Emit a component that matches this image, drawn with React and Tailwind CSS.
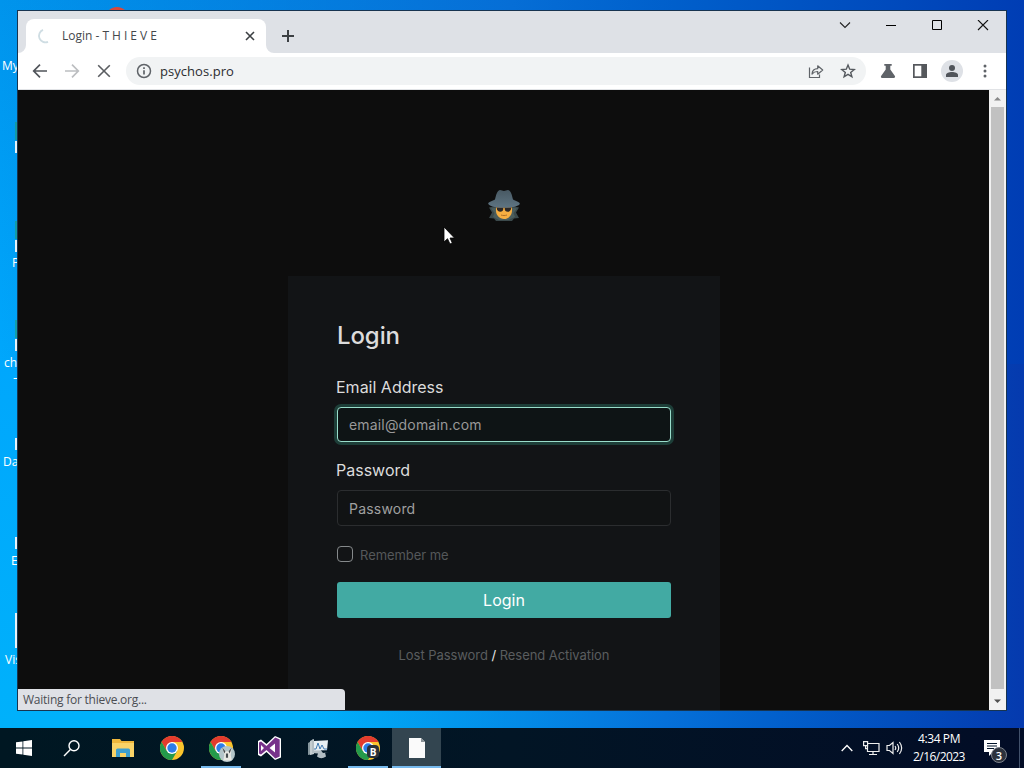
import React from 'react';

const desktopLabels = [
    { text: 'My', className: 'left-[2px] top-[58px]' },
    { text: 'P', className: 'left-[12px] top-[255px]' },
    { text: 'ch', className: 'left-[4px] top-[355px]' },
    { text: '–', className: 'left-[13px] top-[370px]' },
    { text: 'Da', className: 'left-[3px] top-[454px]' },
    { text: 'E', className: 'left-[11px] top-[553px]' },
    { text: 'Vis', className: 'left-[5px] top-[652px]' },
];

// Edges of the shortcut icons that stick out behind the window
const desktopEdges = [
    'top-[141px] h-3',
    'top-[240px] h-3',
    'top-[339px] h-3',
    'top-[438px] h-3',
    'top-[537px] h-3',
    'top-[613px] h-[35px]',
];

const greenEdges = ['top-[122px]', 'top-[221px]', 'top-[320px]'];

function Desktop() {
    return (
        <>
            {greenEdges.map((pos) => (
                <div key={pos} className={`absolute left-[15px] w-[3px] h-[18px] bg-[#1f9d72]/60 ${pos}`} />
            ))}
            {desktopEdges.map((pos) => (
                <div key={pos} className={`absolute left-[15px] w-[3px] bg-[#e8f2f8] ${pos}`} />
            ))}
            {desktopLabels.map((l) => (
                <span key={l.text} className={`absolute text-xs leading-4 text-white ${l.className}`}>{l.text}</span>
            ))}
            <div className="absolute left-[105px] top-[7px] w-6 h-6 rounded-full bg-[#d9483b]" />
        </>
    );
}

function TitleBar() {
    return (
        <div className="flex h-[42px] bg-[#dee1e6] pl-2">
            <div className="relative mt-2 flex w-[240px] items-center rounded-t-lg bg-white pl-[11px] pr-[10px]">
                <svg className="absolute -left-2 bottom-0" width="8" height="8"><path d="M8 0v8H0a8 8 0 0 0 8-8z" fill="#fff" /></svg>
                <svg className="absolute -right-2 bottom-0" width="8" height="8"><path d="M0 0v8h8a8 8 0 0 1-8-8z" fill="#fff" /></svg>
                <svg width="16" height="16" viewBox="0 0 16 16" fill="none">
                    <path d="M6 1.8A6.3 6.3 0 0 0 11 13.8" stroke="#cfdde3" strokeWidth="1.8" />
                </svg>
                <span className="ml-[9px] flex-1 whitespace-pre text-xs text-[#45484c]">
                    Login - <span className="tracking-[-0.05px]">T H I E V E</span>
                </span>
                <svg width="12" height="12" viewBox="0 0 12 12" stroke="#3c4043" strokeWidth="1.6"><path d="M2 2l8 8M10 2l-8 8" /></svg>
            </div>
            <svg className="ml-[15px] mt-[18px]" width="14" height="14" stroke="#3c4043" strokeWidth="2"><path d="M7 1v12M1 7h12" /></svg>
            <div className="ml-auto flex">
                <svg className="mt-[9px]" width="46" height="12" fill="none" stroke="#222" strokeWidth="1.1"><path d="M18 2.5l5 5 5-5" /></svg>
                <svg className="mt-[9px]" width="46" height="12" fill="none" stroke="#000"><path d="M18 5.5h10" /></svg>
                <svg className="mt-[9px]" width="46" height="12" fill="none" stroke="#000"><path d="M18.5 .5h9v9h-9z" /></svg>
                <svg className="mt-[9px]" width="46" height="12" fill="none" stroke="#111" strokeWidth="1.1"><path d="M18 0l10 10M28 0L18 10" /></svg>
            </div>
        </div>
    );
}

function Toolbar() {
    return (
        <div className="flex h-[37px] items-center border-b border-[#e1e3e6] bg-white pl-[14px] pr-[13px]">
            <svg width="16" height="16" fill="none" stroke="#50545a" strokeWidth="1.7"><path d="M15 8H2M8 1.7L1.7 8 8 14.3" /></svg>
            <svg className="ml-4" width="16" height="16" fill="none" stroke="#bcbec1" strokeWidth="1.7"><path d="M1 8h13M8 1.7L14.3 8 8 14.3" /></svg>
            <svg className="ml-4" width="16" height="16" fill="none" stroke="#5a5d61" strokeWidth="1.6"><path d="M2.2 2.2l11.6 11.6M13.8 2.2L2.2 13.8" /></svg>
            <div className="ml-[14px] flex h-7 w-[740px] items-center rounded-full bg-[#f1f3f4] pl-[10px] pr-[10px]">
                <svg width="16" height="16" fill="none" stroke="#5f6368" strokeWidth="1.5"><circle cx="8" cy="8" r="6.5" /><path d="M8 7.2v4.3M8 4.3v1.6" strokeWidth="1.7" /></svg>
                <span className="ml-2 flex-1 pt-0.5 text-[13px] tracking-[0.05px] text-[#2b2d30]">psychos.pro</span>
                <svg width="16" height="16" fill="none" stroke="#5f6368" strokeWidth="1.2">
                    <path d="M1.5 4.5v10h10v-3" />
                    <path d="M4 11c.3-3.5 2.4-5.2 5.7-5.3V2.8L14.7 7 9.7 11.2V8.5C7.2 8.4 5.500 9.2 4 11z" strokeLinejoin="round" />
                </svg>
                <svg className="ml-4" width="16" height="16" fill="none" stroke="#55595e" strokeWidth="1.4"><path d="M8 2l1.7 4.2 4.5.3-3.5 2.9 1.2 4.4L8 11.4l-3.9 2.4 1.2-4.4L1.8 6.5l4.5-.3z" /></svg>
            </div>
            <svg className="ml-[14px]" width="16" height="16" fill="#5f6368"><path d="M4.3 1h7.4v1.7h-1.400v3.7l4.6 6.7c.6 1-.1 1.9-1 1.9H2.1c-1 0-1.6-1-1-1.900l4.600-6.700V2.700H4.300z" /></svg>
            <svg className="ml-4" width="16" height="16"><path d="M1 1h14v14H1z" fill="#55585c" /><path d="M2.7 2.7h6.6v10.6H2.7z" fill="#fff" /></svg>
            <div className="ml-[13px] flex h-[22px] w-[22px] items-center justify-center rounded-full bg-[#dee1e6]">
                <svg width="14" height="14" fill="#50545a"><circle cx="7" cy="4" r="3" /><path d="M1 13v-2c0-2 3-3 6-3s6 1 6 3v2z" /></svg>
            </div>
            <svg className="ml-5" width="4" height="16" fill="#5f6368"><circle cx="2" cy="3" r="1.5" /><circle cx="2" cy="8" r="1.5" /><circle cx="2" cy="13" r="1.5" /></svg>
        </div>
    );
}

function DetectiveLogo() {
    return (
        <svg className="ml-[470px] mt-[99px] block" width="32" height="34" viewBox="0 0 32 34">
            <defs>
                <linearGradient id="hat" x1="0" y1="0" x2="0" y2="1">
                    <stop offset="0" stopColor="#485963" />
                    <stop offset="1" stopColor="#5e7482" />
                </linearGradient>
            </defs>
            <path d="M1 18.5l7-1.5h16l7 1.5-3 5 3 5.500-5 .5-2 2.500H8l-2-2.500-5-.5 3-5.500z" fill="#3b494b" />
            <path d="M3 19.500l6-1 1 8 6 4 6-4 1-8 6 1-3.500 4.500 1.500 4-7 3H11l-6-3 1.500-4z" fill="#4b5d5c" />
            <path d="M8 16h16v6c0 4-3.500 8-8 8s-8-4-8-8z" fill="#f6ae42" />
            <path d="M8 16h16v3H8z" fill="#af752d" />
            <path d="M8.700 18.500h6.600v1.500c0 1.600-1.200 2.800-3 2.800s-3.600-1.400-3.600-4.300zM16.700 18.500h6.600c0 2.900-1.800 4.300-3.600 4.300s-3-1.200-3-2.800z" fill="#2c2826" />
            <path d="M13 26c2 .7 4 .7 6 0" stroke="#b07027" fill="none" />
            <path d="M.2 14.500c0-1 4.500-3 6.800-4C8 6.500 9 1.500 11.800 1c1.500-.2 2.700 1 4.200 1S18.700.8 20.200 1c2.800.5 3.800 5.500 4.800 9.500 2.300 1 6.800 3 6.800 4 0 2.200-6 4.300-15.800 4.300S.2 16.700.2 14.500z" fill="url(#hat)" />
        </svg>
    );
}

function LoginCard() {
    return (
        <div className="ml-[270px] mt-[53px] h-[440px] w-[432px] bg-[#121416] px-[49px] pt-[45px] text-[#dcdcdc]">
            <h1 className="text-2xl font-medium leading-[29px] tracking-[-0.1px]">Login</h1>
            <label className="-ml-px mt-[27px] block text-base leading-5">Email Address</label>
            <input
                placeholder="email@domain.com"
                className="mt-[10px] block h-[35px] w-full rounded-[4px] border border-[#9addcb] bg-[#0e1415] px-[11px] text-sm tracking-[0.17px] outline-none ring-3 ring-[#1d3e38] placeholder:text-[#999]"
            />
            <label className="-ml-px mt-[18px] block text-base leading-5">Password</label>
            <input
                placeholder="Password"
                className="mt-[10px] block h-9 w-full rounded-[4px] border border-[#2b2d2f] bg-[#111314] px-[11px] text-sm tracking-[0.2px] outline-none placeholder:text-[#a0a0a0]"
            />
            <div className="mt-5 flex h-4 items-center">
                <span className="h-4 w-4 rounded-[4px] border border-[#85898b]" />
                <span className="ml-[7px] mt-px text-[13px] leading-4 tracking-[-0.05px] text-[#55585a]">Remember me</span>
            </div>
            <button className="mt-5 block h-9 w-full rounded-[3px] bg-[#42aaa3] text-base text-white">Login</button>
            <p className="mt-[29px] text-center text-[13px] leading-4 tracking-[-0.06px] text-[#5a5d5f]">
                Lost Password <span className="text-[#e8e8e8]">/</span> Resend Activation
            </p>
        </div>
    );
}

function BrowserWindow() {
    return (
        <div className="absolute left-[17px] top-[10px] flex h-[701px] w-[990px] flex-col border border-[#173450]">
            <TitleBar />
            <Toolbar />
            <div className="relative flex min-h-0 flex-1">
                <main className="flex-1 overflow-hidden bg-[#0d0d0d] font-['Inter',sans-serif]">
                    <DetectiveLogo />
                    <LoginCard />
                </main>
                <div className="flex w-[17px] flex-col items-center justify-between bg-[#f1f1f1]">
                    <svg width="17" height="17" fill="#888"><path d="M5 10.500l3.500-3.500 3.500 3.500z" /></svg>
                    <div className="w-[13px] flex-1 bg-[#c1c1c1]" />
                    <svg className="mt-1" width="17" height="17" fill="#505050"><path d="M5 6.500h7L8.500 10z" /></svg>
                </div>
                <div className="absolute bottom-0 left-0 h-[21px] w-[327px] rounded-tr-[4px] bg-[#dfe1e6] pl-[5px] text-xs leading-[22px] tracking-[-0.24px] text-[#4b4e53]">
                    Waiting for thieve.org...
                </div>
            </div>
        </div>
    );
}

function ChromeLogo() {
    return (
        <svg width="24" height="24" viewBox="0 0 24 24">
            <circle cx="12" cy="12" r="12" fill="#fbc42c" />
            <path d="M1.600 6A12 12 0 0 1 22.400 6H12L6.800 15z" fill="#e33b2e" />
            <path d="M1.600 6A12 12 0 0 0 12 24l5.200-9L6.800 15z" fill="#249a4b" />
            <circle cx="12" cy="12" r="6" fill="#fff" />
            <circle cx="12" cy="12" r="4.700" fill="#2d7de9" />
        </svg>
    );
}

function TaskItem({ children, open, active }) {
    return (
        <div className={`relative flex h-10 w-[49px] items-center justify-center ${active ? 'bg-[#334550]' : ''}`}>
            {children}
            {open && <div className={`absolute bottom-0 h-[2px] bg-[#76b9ed] ${active ? 'w-full' : 'w-10'}`} />}
        </div>
    );
}

function Taskbar() {
    return (
        <div className="relative flex h-10 items-center bg-linear-to-r from-[#001722] via-[#021525] to-[#020c26] text-white">
            <TaskItem>
                <svg className="mr-0.5" width="16" height="16" fill="#fff"><path d="M0 2.300l6.500-.9v6.100H0zM7.300 1.300L16 0v7.500H7.300zM0 8.400h6.500v6.200L0 13.700zM7.300 8.400H16V16l-8.700-1.200z" /></svg>
            </TaskItem>
            <TaskItem>
                <svg className="mr-[3px]" width="18" height="18" fill="none" stroke="#fff" strokeWidth="1.400"><circle cx="11" cy="6.800" r="5" /><path d="M7.400 10.500L1 17" /></svg>
            </TaskItem>
            <TaskItem>
                <svg width="24" height="20">
                    <path d="M1 1h8l1.500 2H23v16H1z" fill="#efb73c" />
                    <path d="M1 5h22v14H1z" fill="#fad367" />
                    <path d="M5 19V12q0-1.500 1.500-1.500h11q1.500 0 1.500 1.500v7h-4v-4H9v4z" fill="#3e9fd0" />
                </svg>
            </TaskItem>
            <TaskItem><ChromeLogo /></TaskItem>
            <TaskItem open>
                <ChromeLogo />
                <svg className="absolute left-[23px] top-[18px]" width="16" height="16" viewBox="0 0 15 15">
                    <circle cx="7.500" cy="7.500" r="7.500" fill="#b3c5c9" />
                    <path d="M3 1.500l3 3.500h3l3-3.500-1 7 1 5H4l1-5z" fill="#e8e8e3" />
                    <path d="M3 1.500l3 3.500-1 2zM12 1.500L9 5l1 2zM6.500 7h2v4h-2z" fill="#454b4e" />
                </svg>
            </TaskItem>
            <TaskItem>
                <svg className="mr-px" width="24" height="24">
                    <path d="M1 5l3-1.500L9.500 8 18 0l6 2.500v19L18 24l-8.500-8L4 20.500 1 19z" fill="#fff" />
                    <path d="M2 6.500l2-1 5.500 4.600L18.300 1.500 22.700 3.400v17.200l-4.400 1.900-8.800-8.600L4 18.500l-2-1zM4 9v6l3-3zM18 7.500L12.500 12l5.500 4.500z" fill="#77328a" fillRule="evenodd" />
                </svg>
            </TaskItem>
            <TaskItem>
                <svg width="24" height="22">
                    <path d="M1 6l5-3v14L1 18z" fill="#87979e" />
                    <path d="M3 4l4-2v15l-4 1z" fill="#c5cdd0" />
                    <path d="M5 2l18-1-1 14-6 1z M5 2v14l6 .5-1 3q4 3.500 9 0l-1-4 4-.5 1-14z" fill="#b3bdc2" />
                    <path d="M7 4l14-.8-1 10L7 13.500z" fill="#e8eff3" />
                    <path d="M7 12h2l2-6 2 6 2-4 2 4h3" stroke="#407ab2" fill="none" />
                </svg>
            </TaskItem>
            <TaskItem open>
                <ChromeLogo />
                <span className="absolute left-[24px] top-[17px] flex h-[13px] w-[12px] items-center justify-center rounded-sm bg-[#29313a] text-[10px] font-bold leading-none">B</span>
            </TaskItem>
            <TaskItem open active>
                <svg width="16" height="20"><path d="M0 0h12l4 4v16H0z" fill="#fafafa" /><path d="M12 0v4h4z" fill="#8b9398" /></svg>
            </TaskItem>
            <div className="ml-auto flex items-center">
                <svg width="12" height="8" fill="none" stroke="#fff" strokeWidth="1.300"><path d="M.7 7L6 1.500 11.300 7" /></svg>
                <svg className="ml-[10px]" width="17" height="16" fill="none" stroke="#eee" strokeWidth="1.200">
                    <path d="M5 3.500h11v8H4.500V6M10 11.500v3M6 14.500h8M.6 1.600h4v4h-4zM2.600 5.600v3h2" />
                </svg>
                <svg className="ml-[6px]" width="17" height="16" fill="none" stroke="#eee" strokeWidth="1.200">
                    <path d="M1 5.500h2.500L7 2.500v11l-3.500-3H1zM9 6q1.500 2 0 4M11.200 4q3 4 0 8M13.400 2q4.500 6 0 12" />
                </svg>
                <div className="ml-[8px] w-[56px] text-center text-xs leading-[18px]">
                    <div className="whitespace-nowrap tracking-[-0.4px]">4:34 PM</div>
                    <div className="whitespace-nowrap tracking-[-0.55px]">2/16/2023</div>
                </div>
                <div className="relative ml-[17px] h-[16px] w-[40px]">
                    <svg width="17" height="16"><path d="M0 0h16v12H9l-4 4v-4H0z" fill="#fff" /><path d="M3 3.500h10M3 6h10M3 8.500h7" stroke="#03142a" /></svg>
                    <span className="absolute left-[7px] top-[7px] flex h-4 w-4 items-center justify-center rounded-full border border-[#7d828c] bg-[#2c323d] text-[11px] font-semibold leading-none">3</span>
                </div>
            </div>
            <div className="absolute right-[4px] top-0 h-full w-px bg-[#42516b]" />
        </div>
    );
}

export default function App() {
    return (
        <div className="flex h-[768px] w-[1024px] flex-col overflow-hidden font-['Open_Sans','Noto_Sans',sans-serif]">
            <div className="relative flex h-[728px] flex-col bg-linear-to-b from-[#0094ec] via-[#00a7fc] to-[#00b1fb]">
                {/* Wallpaper darkens to the right, later at the bottom than at the top */}
                <div className="h-[364px] bg-linear-to-r from-transparent via-[#066ed6] to-[#003db4]" />
                <div className="h-[364px] bg-linear-to-r from-transparent from-30% via-[#0570d9] via-65% to-[#053aae]" />
                <Desktop />
                <BrowserWindow />
                {/* Mouse pointer */}
                <svg className="absolute left-[443px] top-[226px]" width="13" height="20"><path d="M1 1v15l3.500-3.300L7 18l2.300-1-2.300-5h4.500z" fill="#fff" stroke="#000" strokeWidth=".8" /></svg>
            </div>
            <Taskbar />
        </div>
    );
}
